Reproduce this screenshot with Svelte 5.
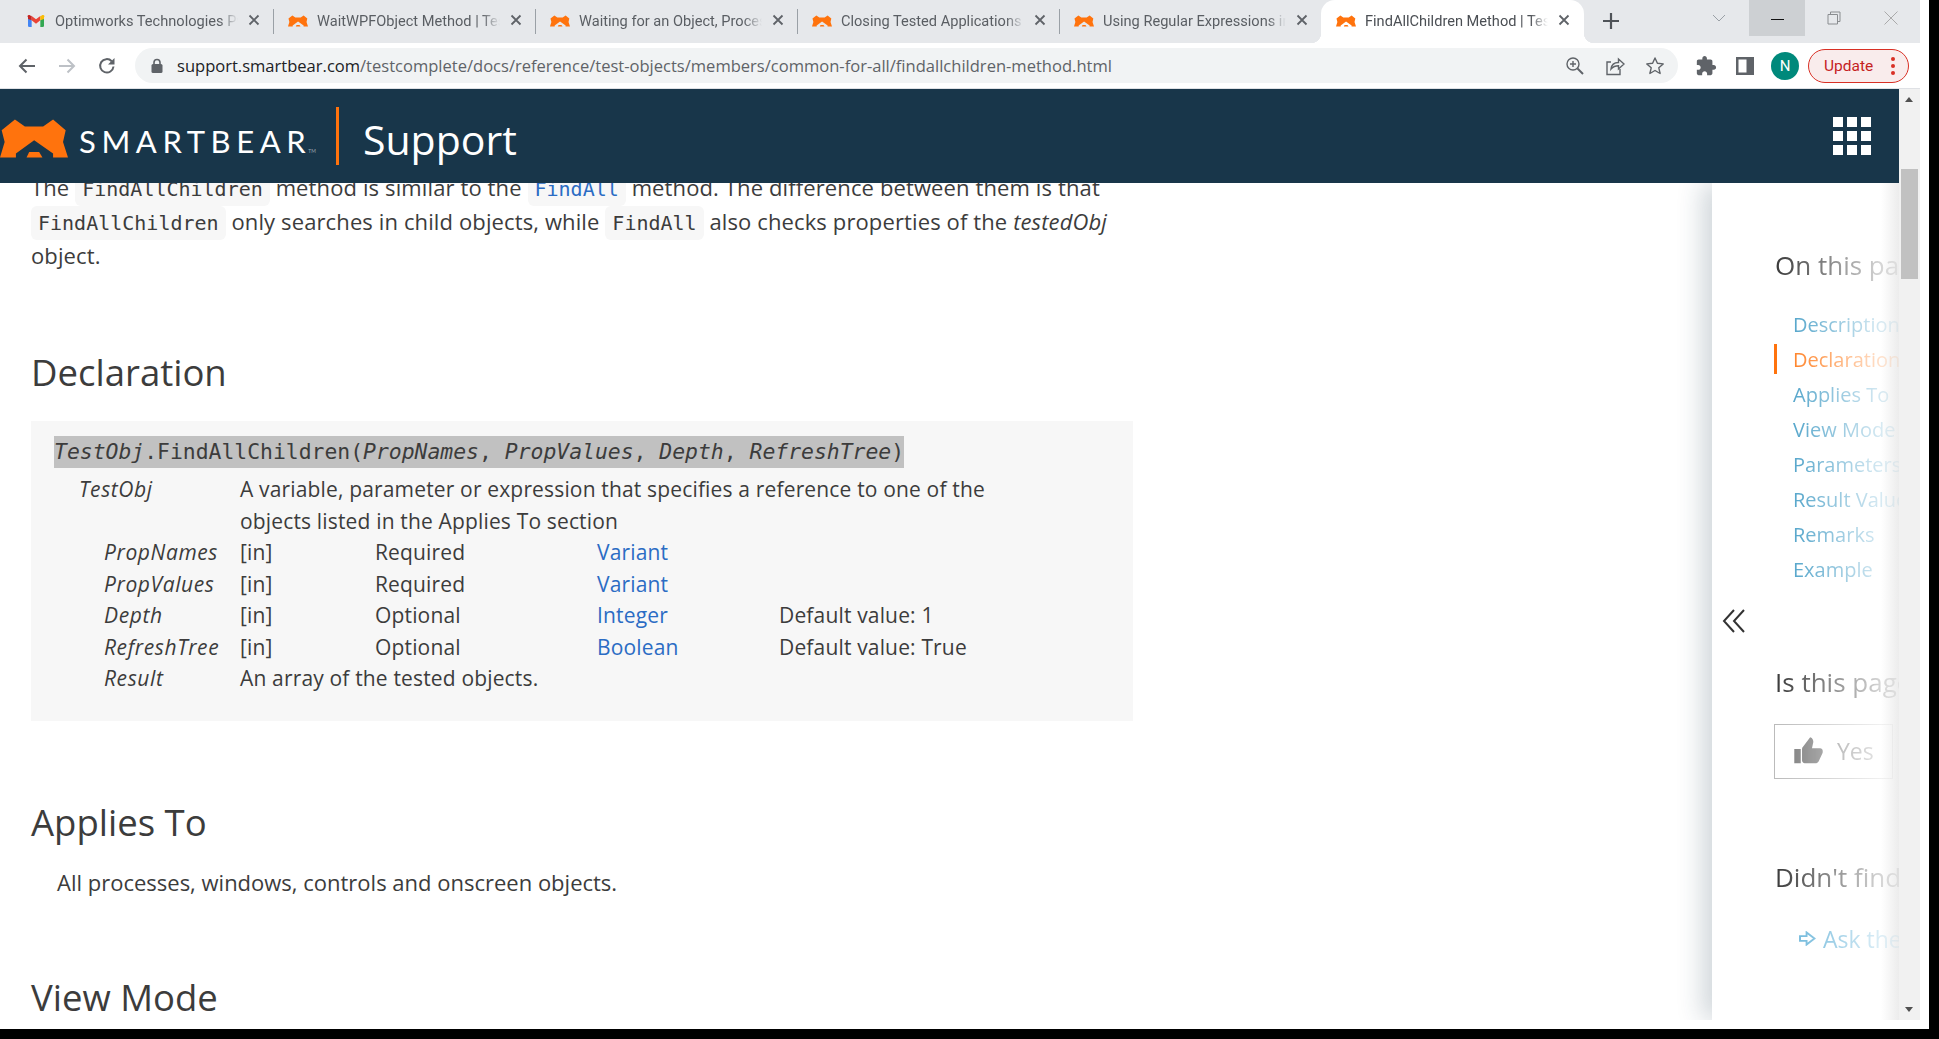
<script lang="ts">
  const tabs = [
    { title: 'Optimworks Technologies Pvt Ltd', gmail: true },
    { title: 'WaitWPFObject Method | TestComplete' },
    { title: 'Waiting for an Object, Process or Window' },
    { title: 'Closing Tested Applications and Their Windows' },
    { title: 'Using Regular Expressions in Scripts' },
    { title: 'FindAllChildren Method | TestComplete', active: true },
  ]
  const toc = ['Description', 'Declaration', 'Applies To', 'View Mode', 'Parameters', 'Result Value', 'Remarks', 'Example']
  const params = [
    { name: 'PropNames', need: 'Required', type: 'Variant', def: '' },
    { name: 'PropValues', need: 'Required', type: 'Variant', def: '' },
    { name: 'Depth', need: 'Optional', type: 'Integer', def: 'Default value: 1' },
    { name: 'RefreshTree', need: 'Optional', type: 'Boolean', def: 'Default value: True' },
  ]
</script>

{#snippet bear(cls)}
  <svg class={cls} viewBox="0 82 205 115" aria-hidden="true">
    <path fill="#ff730d" d="M45 82 75 103H130L160 82 198 115 190 150 205 197H160V185L103 145 48 185V197H0L14 150 5 115Z" />
    <path fill="#ff730d" d="M80 197 88 180H118L128 197Z" />
  </svg>
{/snippet}

<div class="screen">
  <div class="window">
    <div class="tabstrip">
      {#each tabs as tab, i}
        <div class="tab" class:active={tab.active}>
          {#if tab.gmail}
            <svg class="fav" viewBox="0 0 24 18" aria-hidden="true">
              <path fill="#4285f4" d="M0 3v13a2 2 0 0 0 2 2h3.5V8z" />
              <path fill="#34a853" d="M24 3v13a2 2 0 0 1-2 2h-3.5V8z" />
              <path fill="#ea4335" d="M5.5 8 12 13l6.5-5V1.500L12 6.500 5.500 1.500z" />
              <path fill="#c5221f" d="M0 3.500V6l5.500 2V1.500L3.200.6A2 2 0 0 0 0 3.500z" />
              <path fill="#fbbc04" d="M24 3.500V6l-5.500 2V1.500L20.800.6A2 2 0 0 1 24 3.500z" />
            </svg>
          {:else}
            {@render bear('fav')}
          {/if}
          <span class="tab-title">{tab.title}</span>
          <svg class="tab-x" viewBox="0 0 12 12" aria-hidden="true"><path d="M1.5 1.5l9 9M10.500 1.500l-9 9" /></svg>
        </div>
        {#if i < 4}<span class="tab-sep"></span>{/if}
      {/each}
      <svg class="newtab" viewBox="0 0 16 16" aria-hidden="true"><path d="M8 0v16M0 8h16" /></svg>
      <svg class="tablist" viewBox="0 0 14 8" aria-hidden="true"><path d="M1 1l6 6 6-6" /></svg>
      <div class="winctl hover"><span class="min"></span></div>
      <div class="winctl">
        <svg viewBox="0 0 14 14" aria-hidden="true"><path d="M1 3.5h9.5V13H1zM3.500 3.500V1H13v9.500h-2.500" /></svg>
      </div>
      <div class="winctl">
        <svg viewBox="0 0 14 14" aria-hidden="true"><path d="M.5.5l13 13M13.500.500l-13 13" /></svg>
      </div>
    </div>

    <div class="toolbar">
      <span class="tb-btn">
        <svg viewBox="0 0 18 16" width="18" height="16" aria-hidden="true"><path class="ln" d="M17 8H2M8.500 1.500 2 8l6.500 6.500" /></svg>
      </span>
      <span class="tb-btn off">
        <svg viewBox="0 0 18 16" width="18" height="16" aria-hidden="true"><path class="ln" d="M1 8h15M9.500 1.500 16 8l-6.500 6.500" /></svg>
      </span>
      <span class="tb-btn">
        <svg viewBox="0 0 18 18" width="18" height="18" aria-hidden="true">
          <path class="ln" d="M15.500 9.500A6.700 6.700 0 1 1 13.700 4.200" />
          <path class="fl" d="M16.500 1v6.500H10z" />
        </svg>
      </span>
      <div class="omnibox">
        <svg class="lock" viewBox="0 0 14 16" aria-hidden="true">
          <path fill="none" stroke="#5f6368" stroke-width="1.6" d="M4 7V4.500a3 3 0 0 1 6 0V7" />
          <rect x="1.5" y="6" width="11" height="9" rx="1.5" fill="#5f6368" />
        </svg>
        <span class="url"><b>support.smartbear.com</b>/testcomplete/docs/reference/test-objects/members/common-for-all/findallchildren-method.html</span>
        <span class="omni-icons">
          <span class="tb-btn">
            <svg viewBox="0 0 20 20" width="20" height="20" aria-hidden="true">
              <circle class="ln thin" cx="8" cy="8" r="6" />
              <path class="ln thin" d="M8 5v6M5 8h6" />
              <path class="ln" d="M12.500 12.500 18 18" />
            </svg>
          </span>
          <span class="tb-btn">
            <svg viewBox="0 0 20 20" width="20" height="20" aria-hidden="true">
              <path class="ln thin" d="M6 6H2v12.500h13V13" />
              <path class="ln thin" d="M6 13c.5-4 3.500-6.500 7.500-6.500V3L19 8l-5.500 5V9.800C10 9.800 7.800 11 6 13z" />
            </svg>
          </span>
          <span class="tb-btn">
            <svg viewBox="0 0 20 20" width="20" height="20" aria-hidden="true">
              <path class="ln thin" stroke-linejoin="round" d="M10 2l2.400 5.300 5.800.6-4.400 3.900 1.300 5.700-5.100-3-5.100 3 1.300-5.700L1.800 7.900l5.800-.6z" />
            </svg>
          </span>
        </span>
      </div>
      <span class="tb-btn ext">
        <svg viewBox="0 0 24 24" width="22" height="22" aria-hidden="true">
          <path class="fl" d="M20.500 11H19V7c0-1.100-.9-2-2-2h-4V3.500C13 2.120 11.880 1 10.500 1S8 2.120 8 3.500V5H4c-1.100 0-1.990.9-1.990 2v3.800H3.500c1.490 0 2.700 1.210 2.700 2.700s-1.210 2.700-2.700 2.700H2V20c0 1.100.9 2 2 2h3.800v-1.500c0-1.490 1.210-2.700 2.700-2.700 1.490 0 2.700 1.210 2.700 2.700V22H17c1.100 0 2-.9 2-2v-4h1.500c1.380 0 2.500-1.120 2.500-2.500S21.880 11 20.500 11z" />
        </svg>
      </span>
      <span class="tb-btn">
        <svg viewBox="0 0 18 18" width="18" height="18" aria-hidden="true">
          <rect class="fl" width="18" height="18" />
          <rect x="2.500" y="2.500" width="8" height="13" fill="#fff" />
        </svg>
      </span>
      <span class="tb-btn"><span class="avatar">N</span></span>
      <div class="update">
        <span>Update</span>
        <span class="dots"><i></i><i></i><i></i></span>
      </div>
    </div>

    <div class="viewport">
      <div class="page">
        <header class="site-head">
          {@render bear('logo')}
          <span class="brand">SMARTBEAR<small>TM</small></span>
          <span class="head-rule"></span>
          <span class="head-title">Support</span>
          <div class="apps">
            {#each Array(9) as _}<i></i>{/each}
          </div>
        </header>

        <div class="body">
          <main class="article">
            <p class="intro">
              The <code>FindAllChildren</code> method is similar to the <code class="link">FindAll</code> method. The difference between them is that<br />
              <code>FindAllChildren</code> only searches in child objects, while <code>FindAll</code> also checks properties of the <em>testedObj</em><br />
              object.
            </p>

            <h2 class="h-decl">Declaration</h2>
            <div class="decl">
              <div class="sig"><span><em>TestObj</em>.FindAllChildren(<em>PropNames</em>, <em>PropValues</em>, <em>Depth</em>, <em>RefreshTree</em>)</span></div>
              <div class="ptable">
                <em class="owner">TestObj</em>
                <span class="wide">A variable, parameter or expression that specifies a reference to one of the<br />objects listed in the Applies To section</span>
                {#each params as p}
                  <em class="pname">{p.name}</em>
                  <span>[in]</span>
                  <span>{p.need}</span>
                  <span class="type">{p.type}</span>
                  <span>{p.def}</span>
                {/each}
                <em class="pname">Result</em>
                <span class="wide">An array of the tested objects.</span>
              </div>
            </div>

            <h2 class="h-applies">Applies To</h2>
            <p class="applies">All processes, windows, controls and onscreen objects.</p>
            <h2 class="h-view">View Mode</h2>
          </main>

          <aside class="panel">
            <div class="panel-inner">
              <div class="panel-title first">On this page</div>
              <ul class="toc">
                {#each toc as item}
                  <li class:current={item === 'Declaration'}>{item}</li>
                {/each}
              </ul>
              <svg class="collapse" viewBox="0 0 24 24" aria-hidden="true"><path d="M12 1 2 12l10 11M22 1 12 12l10 11" /></svg>
              <div class="panel-title helpful">Is this page helpful?</div>
              <div class="vote">
                <svg viewBox="0 0 24 24" width="31" height="31" aria-hidden="true">
                  <path d="M1 21h5V10H1zM23 11.500c0-1.100-.9-2-2-2h-6.300l1-4.600c.2-1.300-.4-3.400-2.400-3.900L7.600 8.600C7.200 9 7 9.500 7 10v9c0 1.100.9 2 2 2h9c.8 0 1.500-.5 1.800-1.200l3-6.500c.1-.2.200-.5.200-.8z" />
                </svg>
                <span>Yes</span>
              </div>
              <div class="panel-title find">Didn't find what you need?</div>
              <div class="ask">
                <svg viewBox="0 0 18 16" width="17" height="15" aria-hidden="true"><path d="M1 5.500h7V1.500L16.500 8 8 14.500v-4H1z" /></svg>
                <span>Ask the Community</span>
              </div>
            </div>
          </aside>
        </div>
      </div>

      <div class="scrollbar">
        <span class="arrow up"></span>
        <span class="thumb"></span>
        <span class="arrow down"></span>
      </div>
    </div>
  </div>
</div>

<style>
  :global(body) {
    margin: 0;
    background: #000;
  }
  .screen {
    width: 1939px;
    height: 1039px;
    background: #000;
    overflow: hidden;
  }
  .window {
    width: 1929px;
    height: 1029px;
    background: #fff;
    overflow: hidden;
    font-family: "Open Sans", sans-serif;
    color: #3c3c3c;
  }

  /* tab strip */
  .tabstrip {
    width: 1920px;
    height: 43px;
    box-sizing: border-box;
    padding-left: 12px;
    background: #e6e8eb;
    display: flex;
    align-items: flex-start;
    font-family: Roboto, sans-serif;
  }
  .tab {
    flex: none;
    width: 261px;
    height: 43px;
    box-sizing: border-box;
    padding: 0 13px 0 14px;
    display: flex;
    align-items: center;
    position: relative;
  }
  .tab.active {
    width: 263px;
    padding: 0 14px 0 15px;
    background: #fff;
    border-radius: 14px 14px 0 0;
  }
  .tab.active::before,
  .tab.active::after {
    content: '';
    position: absolute;
    bottom: 0;
    width: 10px;
    height: 10px;
  }
  .tab.active::before {
    left: -10px;
    background: radial-gradient(circle at 0 0, transparent 10px, #fff 10.5px);
  }
  .tab.active::after {
    right: -10px;
    background: radial-gradient(circle at 100% 0, transparent 10px, #fff 10.5px);
  }
  .fav {
    flex: none;
    width: 20px;
    height: 12px;
    margin-right: 9px;
    margin-top: -2px;
  }
  .tab-title {
    flex: 1;
    min-width: 0;
    white-space: nowrap;
    overflow: hidden;
    font-size: 14.6px;
    color: #5a5e63;
    -webkit-mask-image: linear-gradient(to right, #000 calc(100% - 18px), transparent);
    mask-image: linear-gradient(to right, #000 calc(100% - 18px), transparent);
    margin-top: -2px;
  }
  .tab.active .tab-title {
    color: #4b4f54;
  }
  .tab-x {
    flex: none;
    width: 12px;
    height: 12px;
    margin-left: 10px;
    margin-top: -3px;
    fill: none;
    stroke: #5f6368;
    stroke-width: 1.8;
  }
  .tab-sep {
    flex: none;
    width: 1px;
    height: 25px;
    margin-top: 9px;
    background: #9aa0a6;
  }
  .newtab {
    flex: none;
    width: 16px;
    height: 16px;
    margin: 13px 0 0 19px;
    fill: none;
    stroke: #4f5358;
    stroke-width: 2.2;
  }
  .tablist {
    flex: none;
    width: 14px;
    height: 8px;
    margin: 14px 0 0 93px;
    fill: none;
    stroke: #9aa0a6;
    stroke-width: 1;
  }
  .winctl {
    flex: none;
    width: 57px;
    height: 36px;
    display: flex;
    align-items: center;
    justify-content: center;
  }
  .winctl svg {
    width: 14px;
    height: 14px;
    fill: none;
    stroke: #8a8d90;
    stroke-width: 1;
  }
  .winctl:last-child svg {
    stroke: #aaa;
  }
  .winctl.hover {
    margin-left: 23px;
    background: #cdd0d3;
    width: 56px;
  }
  .min {
    width: 13px;
    height: 1px;
    background: #111;
    margin-top: 3px;
  }

  /* toolbar */
  .toolbar {
    width: 1920px;
    height: 46px;
    box-sizing: border-box;
    padding: 5px 0 5px 7px;
    border-bottom: 1px solid #dfe1e5;
    display: flex;
    align-items: center;
  }
  .tb-btn {
    flex: none;
    width: 40px;
    height: 35px;
    display: flex;
    align-items: center;
    justify-content: center;
  }
  .ln {
    fill: none;
    stroke: #5f6368;
    stroke-width: 2;
  }
  .ln.thin {
    stroke-width: 1.4;
  }
  .fl {
    fill: #5f6368;
  }
  .tb-btn.off .ln {
    stroke: #bdc1c6;
  }
  .omnibox {
    flex: none;
    width: 1543px;
    height: 35px;
    box-sizing: border-box;
    margin-left: 8px;
    padding-left: 15px;
    padding-right: 3px;
    background: #f1f3f4;
    border-radius: 18px;
    display: flex;
    align-items: center;
  }
  .lock {
    flex: none;
    width: 14px;
    height: 16px;
    margin-right: 13px;
  }
  .url {
    font-family: "Open Sans", sans-serif;
    font-size: 16.55px;
    color: #5f6368;
    white-space: nowrap;
  }
  .url b {
    font-weight: 400;
    color: #202124;
  }
  .omni-icons {
    margin-left: auto;
    display: flex;
  }
  .ext {
    margin-left: 8px;
    margin-right: -1px;
  }
  .avatar {
    width: 28px;
    height: 28px;
    border-radius: 50%;
    background: #00897b;
    color: #fff;
    font-family: Roboto, sans-serif;
    font-size: 15px;
    display: flex;
    align-items: center;
    justify-content: center;
  }
  .update {
    flex: none;
    width: 101px;
    height: 34px;
    box-sizing: border-box;
    margin-left: 3px;
    padding: 0 13px 0 15px;
    border: 1px solid #d93025;
    border-radius: 17px;
    background: #f9ecec;
    display: flex;
    align-items: center;
    justify-content: space-between;
    font-family: Roboto, sans-serif;
    font-size: 15.5px;
    color: #c5221f;
  }
  .dots {
    display: flex;
    flex-direction: column;
    gap: 3px;
  }
  .dots i {
    width: 4px;
    height: 4px;
    border-radius: 50%;
    background: #d93025;
  }

  /* page */
  .viewport {
    width: 1920px;
    height: 931px;
    display: flex;
  }
  .page {
    flex: none;
    width: 1899px;
    height: 931px;
    overflow: hidden;
    display: flex;
    flex-direction: column;
  }
  .site-head {
    flex: none;
    height: 94px;
    background: #18364a;
    position: relative;
    z-index: 2;
    display: flex;
    align-items: center;
  }
  .logo {
    flex: none;
    width: 68px;
    height: 39px;
    margin-top: 5px;
  }
  .brand {
    margin-left: 11px;
    font-family: Lato, sans-serif;
    font-size: 31px;
    letter-spacing: 5.6px;
    color: #fff;
    line-height: 1;
    margin-top: 11px;
  }
  .brand small {
    font-size: 5px;
    letter-spacing: 0;
    color: #9aa7b0;
    margin-left: -3px;
  }
  .head-rule {
    flex: none;
    width: 3px;
    height: 58px;
    margin-left: 20px;
    background: #ff730d;
  }
  .head-title {
    margin-left: 24px;
    font-size: 41px;
    color: #fff;
    line-height: 1;
    margin-top: 6px;
  }
  .apps {
    margin-left: auto;
    margin-right: 28px;
    display: grid;
    grid-template-columns: repeat(3, 10px);
    grid-auto-rows: 10px;
    gap: 4px;
  }
  .apps i {
    background: #fff;
  }

  .body {
    flex: 1;
    min-height: 0;
    display: flex;
  }
  .article {
    flex: 1;
    min-width: 0;
    box-sizing: border-box;
    padding-left: 31px;
    margin-top: -13px;
    font-size: 22px;
  }
  p {
    margin: 0;
  }
  .intro,
  .applies {
    line-height: 34px;
    white-space: nowrap;
  }
  .intro {
    letter-spacing: 0.12px;
  }
  .applies {
    margin-top: 23px;
    padding-left: 26px;
  }
  code {
    font-family: "DejaVu Sans Mono", monospace;
    font-size: 20px;
    line-height: 1;
    letter-spacing: 0;
    background: #f7f7f7;
    border-radius: 6px;
    padding: 5px 7px;
    color: #3c3c3c;
  }
  code.link {
    color: #2b6cc4;
  }
  h2 {
    margin: 0;
    font-size: 36.5px;
    font-weight: 400;
    line-height: 40px;
  }
  .h-decl {
    margin-top: 80px;
  }
  .h-applies {
    margin-top: 81px;
  }
  .h-view {
    margin-top: 78px;
  }
  .decl {
    width: 1102px;
    box-sizing: border-box;
    margin-top: 29px;
    padding: 15px 0 26px 23px;
    background: #f7f7f7;
  }
  .sig {
    font-family: "DejaVu Sans Mono", monospace;
    font-size: 21.4px;
    line-height: 32px;
    height: 32px;
    white-space: nowrap;
  }
  .sig span {
    display: inline-block;
    background: #c1c1c1;
  }
  .ptable {
    margin: 6px 0 0 25px;
    display: grid;
    grid-template-columns: 161px 135px 222px 182px 1fr;
    grid-auto-rows: 31.5px;
    line-height: 31.5px;
    font-size: 21px;
    letter-spacing: 0.16px;
    white-space: nowrap;
  }
  .ptable em {
    letter-spacing: 0.6px;
  }
  .wide {
    grid-column: 2 / -1;
  }
  .wide:nth-child(2) {
    grid-row: span 2;
  }
  .owner {
    grid-row: span 2;
  }
  .pname {
    padding-left: 25px;
  }
  .type {
    color: #2b6cc4;
  }

  /* right panel */
  .panel {
    flex: none;
    width: 187px;
    background: linear-gradient(to right, #fff calc(100% - 18px), #ececec);
    box-shadow: -10px 0 24px rgba(24, 54, 74, 0.2);
  }
  .panel-inner {
    height: 100%;
    box-sizing: border-box;
    padding-top: 65px;
    padding-left: 63px;
    overflow: hidden;
    white-space: nowrap;
    -webkit-mask-image: linear-gradient(to right, #000 65px, transparent 197px);
    mask-image: linear-gradient(to right, #000 65px, transparent 197px);
  }
  .panel-title {
    font-size: 26px;
    line-height: 34px;
  }
  .toc {
    list-style: none;
    margin: 24.5px 0 0;
    padding: 0;
    font-size: 20px;
    line-height: 35px;
    color: #3f9ac4;
  }
  .toc li {
    padding-left: 18px;
    position: relative;
  }
  .toc li.current {
    color: #ff730d;
  }
  .toc li.current::before {
    content: '';
    position: absolute;
    left: -1px;
    top: 2px;
    width: 3px;
    height: 30px;
    background: #ff730d;
  }
  .collapse {
    display: block;
    width: 24px;
    height: 24px;
    margin: 22px 0 0 -53px;
    fill: none;
    stroke: #333;
    stroke-width: 2;
  }
  .helpful {
    margin-top: 32px;
  }
  .vote {
    width: 119px;
    height: 55px;
    box-sizing: border-box;
    margin-top: 25px;
    margin-left: -1px;
    padding-left: 18px;
    border: 1px solid #bbb;
    display: flex;
    align-items: center;
    gap: 13px;
    font-size: 23px;
    line-height: 57px;
    color: #888;
  }
  .vote svg {
    flex: none;
    fill: #777;
  }
  .find {
    margin-top: 81px;
  }
  .ask {
    margin-top: 30px;
    padding-left: 24px;
    display: flex;
    align-items: center;
    gap: 7px;
    font-size: 23px;
    line-height: 30px;
    color: #5baed6;
  }
  .ask svg {
    flex: none;
    fill: none;
    stroke: #5baed6;
    stroke-width: 2;
  }

  /* scrollbar */
  .scrollbar {
    flex: none;
    width: 21px;
    height: 931px;
    background: #f1f1f1;
    position: relative;
  }
  .thumb {
    position: absolute;
    left: 2px;
    top: 80px;
    width: 17px;
    height: 110px;
    background: #c1c1c1;
  }
  .arrow {
    position: absolute;
    left: 6px;
    width: 0;
    height: 0;
    border-left: 4.5px solid transparent;
    border-right: 4.5px solid transparent;
  }
  .arrow.up {
    top: 8px;
    border-bottom: 5px solid #505050;
  }
  .arrow.down {
    bottom: 8px;
    border-top: 5px solid #505050;
  }
</style>
